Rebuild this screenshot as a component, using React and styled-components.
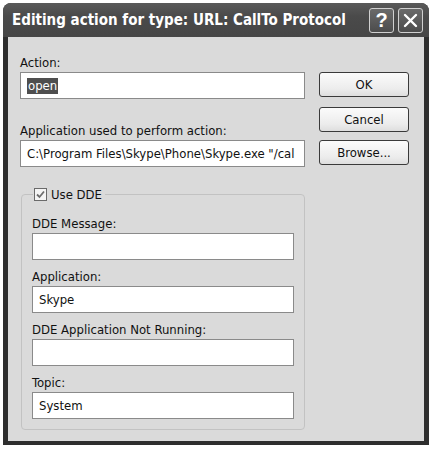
import React from "react";
import styled, { createGlobalStyle } from "styled-components";

const GlobalStyle = createGlobalStyle`
  html, body {
    margin: 0;
    padding: 0;
    background: #ffffff;
  }
  body {
    font-family: "DejaVu Sans Condensed", "DejaVu Sans", sans-serif;
  }
`;

const Window = styled.div`
  margin: 3px 0 0 3px;
  width: 426px;
  height: 442px;
  display: flex;
  flex-direction: column;
  border-radius: 8px 8px 0 0;
  overflow: hidden;
  background: #2e2e2e;
`;

const TitleBar = styled.div`
  height: 34px;
  display: flex;
  align-items: center;
  padding: 0 6px 0 9px;
  background: linear-gradient(#5a5a5a, #4a4a4a 40%, #464646);
`;

const Title = styled.div`
  flex: 1;
  color: #ffffff;
  font-family: "DejaVu Sans Condensed", "DejaVu Sans", sans-serif;
  font-weight: bold;
  font-size: 15px;
  white-space: nowrap;
`;

const CaptionButton = styled.div`
  width: 23px;
  height: 23px;
  margin-left: 4px;
  border: 1px solid #d0d0d0;
  border-radius: 3px;
  background: linear-gradient(#6a6a6a, #4c4c4c);
  color: #ffffff;
  display: flex;
  align-items: center;
  justify-content: center;
  font-family: "Liberation Sans", sans-serif;
  font-weight: bold;
  font-size: 20px;
`;

const Body = styled.div`
  flex: 1;
  margin: 0 5px 4px 5px;
  background: #dadada;
  display: flex;
  gap: 14px;
  padding: 18px 0 0 12px;
  color: #111111;
  font-size: 13px;
`;

const LeftColumn = styled.div`
  width: 285px;
  display: flex;
  flex-direction: column;
`;

const RightColumn = styled.div`
  width: 90px;
  display: flex;
  flex-direction: column;
  padding-top: 17px;
`;

const Label = styled.div`
  line-height: 15px;
  height: 15px;
  margin-top: ${(p) => p.$top || 0}px;
  white-space: nowrap;
`;

const Field = styled.div`
  height: 25px;
  margin-top: 2px;
  border: 1px solid #8a8a8a;
  background: #ffffff;
  display: flex;
  align-items: center;
  padding-left: 6px;
  white-space: nowrap;
  overflow: hidden;
`;

const Selected = styled.span`
  background: #4e4e4e;
  color: #ffffff;
  padding: 0 1px;
  line-height: 16px;
`;

const Button = styled.div`
  height: 23px;
  margin-bottom: ${(p) => p.$gap || 0}px;
  border: 1px solid #3a3a3a;
  border-radius: 3px;
  background: linear-gradient(#fbfbfb, #ececec 70%, #dedede);
  display: flex;
  align-items: center;
  justify-content: center;
`;

const Group = styled.fieldset`
  margin: 20px 0 0 1px;
  padding: 0 10px 10px 10px;
  border: 1px solid #c2c2c2;
  border-radius: 4px;
  width: 262px;
  display: flex;
  flex-direction: column;
  gap: 9px;
`;

const Legend = styled.legend`
  margin-left: 1px;
  padding: 0 3px 0 1px;
  display: flex;
  align-items: center;
  gap: 4px;
  line-height: 15px;
`;

const CheckBox = styled.span`
  width: 11px;
  height: 11px;
  border: 1px solid #6a6a6a;
  background: #f4f4f4;
  display: flex;
  align-items: center;
  justify-content: center;
`;

const GroupField = styled.div`
  display: flex;
  flex-direction: column;
  &:first-of-type {
    margin-top: 14px;
  }
`;

const ddeFields = [
  { label: "DDE Message:", value: "" },
  { label: "Application:", value: "Skype" },
  { label: "DDE Application Not Running:", value: "" },
  { label: "Topic:", value: "System" },
];

export default function App() {
  return (
    <>
      <GlobalStyle />
      <Window>
        <TitleBar>
          <Title>Editing action for type: URL: CallTo Protocol</Title>
          <CaptionButton>?</CaptionButton>
          <CaptionButton>
            <svg width="15" height="15" viewBox="0 0 15 15">
              <path d="M2 2 L13 13 M13 2 L2 13" stroke="#fff" strokeWidth="2.4" strokeLinecap="round" />
            </svg>
          </CaptionButton>
        </TitleBar>
        <Body>
          <LeftColumn>
            <Label>Action:</Label>
            <Field>
              <Selected>open</Selected>
            </Field>
            <Label $top={24}>Application used to perform action:</Label>
            <Field>C:\Program Files\Skype\Phone\Skype.exe "/cal</Field>
            <Group>
              <Legend>
                <CheckBox>
                  <svg width="9" height="9" viewBox="0 0 9 9">
                    <path d="M1 4.5 L3.5 7 L8 1.5" stroke="#6e6e6e" strokeWidth="1.8" fill="none" />
                  </svg>
                </CheckBox>
                Use DDE
              </Legend>
              {ddeFields.map((f) => (
                <GroupField key={f.label}>
                  <Label>{f.label}</Label>
                  <Field>{f.value}</Field>
                </GroupField>
              ))}
            </Group>
          </LeftColumn>
          <RightColumn>
            <Button $gap={10}>OK</Button>
            <Button $gap={8}>Cancel</Button>
            <Button>Browse...</Button>
          </RightColumn>
        </Body>
      </Window>
    </>
  );
}
